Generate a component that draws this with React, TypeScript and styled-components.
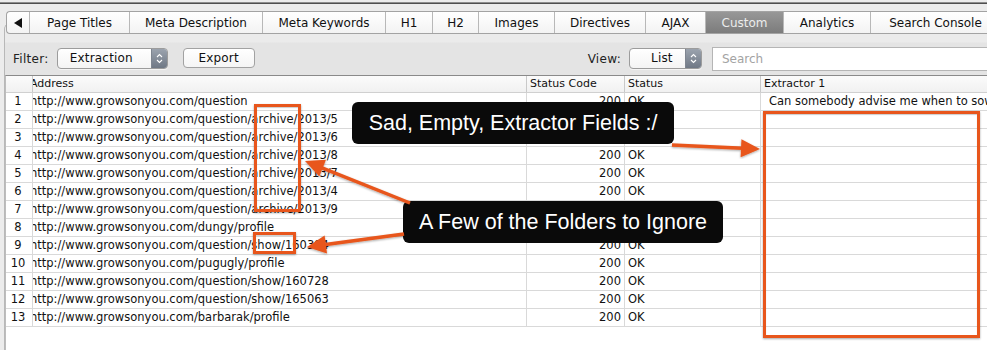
import React from 'react'
import styled, { createGlobalStyle } from 'styled-components'

const GlobalStyle = createGlobalStyle`
  html, body {
    margin: 0;
    padding: 0;
    background: #ececec;
    overflow: hidden;
  }
  body {
    font-family: 'DejaVu Sans', 'Liberation Sans', sans-serif;
  }
`

const ORANGE = '#e8561c'

const tabs = [
  { label: 'Page Titles', width: 100 },
  { label: 'Meta Description', width: 133 },
  { label: 'Meta Keywords', width: 123 },
  { label: 'H1', width: 47 },
  { label: 'H2', width: 46 },
  { label: 'Images', width: 76 },
  { label: 'Directives', width: 91 },
  { label: 'AJAX', width: 60 },
  { label: 'Custom', width: 78, active: true },
  { label: 'Analytics', width: 87 },
  { label: 'Search Console', width: 130 },
]

const base = 'http://www.growsonyou.com'
const rows = [
  { url: `${base}/question`, extract: 'Can somebody advise me when to sow my seeds this year' },
  { url: `${base}/question/archive/2013/5` },
  { url: `${base}/question/archive/2013/6` },
  { url: `${base}/question/archive/2013/8` },
  { url: `${base}/question/archive/2013/7` },
  { url: `${base}/question/archive/2013/4` },
  { url: `${base}/question/archive/2013/9` },
  { url: `${base}/dungy/profile` },
  { url: `${base}/question/show/160394` },
  { url: `${base}/pugugly/profile` },
  { url: `${base}/question/show/160728` },
  { url: `${base}/question/show/165063` },
  { url: `${base}/barbarak/profile` },
]

const COLS = '27px 494px 98px 136px 300px'

// arrow from tail to tip, head drawn as a triangle
const arrowHead = (x1: number, y1: number, x2: number, y2: number, len = 19, half = 9) => {
  const dx = x2 - x1
  const dy = y2 - y1
  const d = Math.sqrt(dx * dx + dy * dy)
  const ux = dx / d
  const uy = dy / d
  const bx = x2 - ux * len
  const by = y2 - uy * len
  return {
    line: { x1, y1, x2: bx + ux * 2, y2: by + uy * 2 },
    points: `${x2},${y2} ${bx - uy * half},${by + ux * half} ${bx + uy * half},${by - ux * half}`,
  }
}

const arrows = [
  arrowHead(672, 145, 760, 149),
  arrowHead(410, 203, 305, 161),
  arrowHead(404, 234, 307, 247),
]

const Chevrons = () => (
  <svg width="7" height="11" viewBox="0 0 7 11">
    <path d="M1 4 L3.5 1.5 L6 4 M1 7 L3.5 9.5 L6 7" stroke="#fff" strokeWidth="1.1" fill="none" />
  </svg>
)

const App = () => {
  return (
    <Screen>
      <GlobalStyle />
      <TopRule />
      <TabStrip>
        <Tab $width={23}>
          <svg width="9" height="10" viewBox="0 0 9 10">
            <polygon points="0,5 8,0 8,10" fill="#111" />
          </svg>
        </Tab>
        {tabs.map(t => (
          <Tab key={t.label} $width={t.width} $active={t.active}>
            {t.label}
          </Tab>
        ))}
      </TabStrip>
      <Panel>
        <Toolbar>
          <Label>Filter:</Label>
          <Select $width={111}>
            <SelectText>Extraction</SelectText>
            <Stepper>
              <Chevrons />
            </Stepper>
          </Select>
          <Button>Export</Button>
          <Spacer />
          <Label>View:</Label>
          <Select $width={73}>
            <SelectText $pad={21}>List</SelectText>
            <Stepper>
              <Chevrons />
            </Stepper>
          </Select>
          <SearchBox>Search</SearchBox>
        </Toolbar>
        <Table>
          <HeaderRow>
            <HeadCell />
            <HeadCell><Clip>Address</Clip></HeadCell>
            <HeadCell>Status Code</HeadCell>
            <HeadCell>Status</HeadCell>
            <HeadCell>Extractor 1</HeadCell>
          </HeaderRow>
          {rows.map((r, i) => (
            <Row key={i}>
              <NumCell>{i + 1}</NumCell>
              <Cell><Clip>{r.url}</Clip></Cell>
              <Cell $align="right">200</Cell>
              <Cell>OK</Cell>
              <Cell $indent={8}>{r.extract || ''}</Cell>
            </Row>
          ))}
        </Table>
      </Panel>

      <Callout $left={352} $top={102} $width={322}>Sad, Empty, Extractor Fields :/</Callout>
      <Callout $left={403} $top={201} $width={320}>A Few of the Folders to Ignore</Callout>

      <Marker $left={254} $top={104} $width={47} $height={108} />
      <Marker $left={253} $top={232} $width={43} $height={22} />
      <Marker $left={763} $top={111} $width={217} $height={227} />

      <Arrows width="987" height="350" viewBox="0 0 987 350">
        <defs>
          <filter id="sh" x="-10%" y="-10%" width="120%" height="120%">
            <feDropShadow dx="0" dy="1" stdDeviation="0.8" floodColor="#000" floodOpacity="0.35" />
          </filter>
        </defs>
        {arrows.map((a, i) => (
          <g key={i} filter="url(#sh)">
            <line {...a.line} stroke={ORANGE} strokeWidth="3.5" />
            <polygon points={a.points} fill={ORANGE} />
          </g>
        ))}
      </Arrows>
    </Screen>
  )
}

export default App

const Screen = styled.div`
  position: relative;
  width: 987px;
  height: 350px;
  overflow: hidden;
  background: #ececec;
`

const TopRule = styled.div`
  height: 11px;
  box-sizing: border-box;
  padding-top: 2px;
  &::before {
    content: '';
    display: block;
    height: 0;
    border-top: 1px solid #8d8d8d;
    border-bottom: 1px solid #4f4f4f;
  }
`

const TabStrip = styled.div`
  position: relative;
  z-index: 1;
  display: flex;
  margin-left: 6px;
  margin-bottom: -10px;
  height: 21px;
  width: max-content;
  border: 1px solid #a3a3a3;
  border-right: none;
  border-radius: 4px 0 0 4px;
  background: linear-gradient(#ffffff, #f3f3f3);
  overflow: hidden;
`

const Tab = styled.div<{ $width: number; $active?: boolean }>`
  flex: 0 0 auto;
  width: ${p => p.$width - 1}px;
  border-right: 1px solid #b8b8b8;
  display: flex;
  align-items: center;
  justify-content: center;
  font-size: 12px;
  color: ${p => (p.$active ? '#ececec' : '#111')};
  background: ${p => (p.$active ? 'linear-gradient(#979797, #7c7c7c)' : 'transparent')};
`

const Panel = styled.div`
  margin-left: 4px;
  border-left: 1px solid #b8b8b8;
  border-top: 1px solid #b8b8b8;
  border-radius: 5px 0 0 0;
  background: linear-gradient(#ebebeb 0, #ebebeb 17px, #e4e4e4 18px);
  padding-top: 10px;
  height: 327px;
  box-sizing: border-box;
`

const Toolbar = styled.div`
  display: flex;
  align-items: flex-start;
  height: 40px;
  box-sizing: border-box;
  padding: 13px 0 0 8px;
`

const Label = styled.span`
  font-size: 12px;
  letter-spacing: 0.3px;
  color: #222;
  line-height: 21px;
  margin-top: 1px;
  margin-right: 8px;
`

const Select = styled.div<{ $width: number }>`
  position: relative;
  width: ${p => p.$width}px;
  height: 21px;
  box-sizing: border-box;
  border: 1px solid #9c9c9c;
  border-radius: 4px;
  background: linear-gradient(#ffffff, #f4f4f4);
  display: flex;
  overflow: hidden;
  box-shadow: 0 1px 0 rgba(255, 255, 255, 0.6);
`

const SelectText = styled.span<{ $pad?: number }>`
  flex: 1;
  font-size: 12px;
  letter-spacing: 0.2px;
  line-height: 19px;
  padding-left: ${p => p.$pad || 12}px;
  color: #111;
`

const Stepper = styled.div`
  width: 15px;
  display: flex;
  align-items: center;
  justify-content: center;
  background: linear-gradient(#9ba3ae, #6f7885);
  border-left: 1px solid #7e8590;
`

const Button = styled.div`
  margin-left: 15px;
  width: 72px;
  height: 20px;
  box-sizing: border-box;
  border: 1px solid #a2a2a2;
  border-radius: 4px;
  background: linear-gradient(#ffffff, #f5f5f5);
  font-size: 12px;
  letter-spacing: 0.2px;
  line-height: 18px;
  text-align: center;
  color: #111;
`

const Spacer = styled.div`
  flex: 1;
`

const SearchBox = styled.div`
  flex: 0 0 auto;
  margin-left: 10px;
  margin-right: -3px;
  margin-top: -1px;
  width: 278px;
  height: 24px;
  box-sizing: border-box;
  border: 1px solid #b5b5b5;
  background: #fff;
  font-size: 12px;
  line-height: 22px;
  padding-left: 9px;
  color: #a3a3a3;
`

const Table = styled.div`
  border-top: 1px solid #8a8a8a;
  border-left: 1px solid #bdbdbd;
  background: #fff;
  height: 277px;
  font-size: 11.5px;
  color: #111;
`

const HeaderRow = styled.div`
  display: grid;
  grid-template-columns: ${COLS};
  height: 17px;
  box-sizing: border-box;
  background: linear-gradient(#fbfbfb, #f1f1f1);
  border-bottom: 1px solid #d0d0d0;
`

const HeadCell = styled.div`
  border-right: 1px solid #c9c9c9;
  line-height: 16px;
  padding-left: 3px;
  font-size: 11px;
  overflow: hidden;
  white-space: nowrap;
  &:nth-child(2) {
    padding-left: 0;
  }
`

const Row = styled.div`
  display: grid;
  grid-template-columns: ${COLS};
  height: 18px;
  box-sizing: border-box;
  border-bottom: 1px solid #d9d9d9;
`

const Cell = styled.div<{ $align?: string; $indent?: number }>`
  border-right: 1px solid #d9d9d9;
  line-height: 17px;
  white-space: nowrap;
  overflow: hidden;
  text-align: ${p => p.$align || 'left'};
  padding: 0 ${p => (p.$align === 'right' ? 3 : 0)}px 0 ${p => (p.$align === 'right' ? 0 : p.$indent ?? 3)}px;
  &:nth-child(2) {
    padding-left: 0;
  }
`

const NumCell = styled(Cell)`
  text-align: center;
  padding: 0 2px 0 0;
`

const Clip = styled.span`
  display: block;
  margin-left: -3px;
`

const Callout = styled.div<{ $left: number; $top: number; $width: number }>`
  position: absolute;
  left: ${p => p.$left}px;
  top: ${p => p.$top}px;
  width: ${p => p.$width}px;
  height: 42px;
  box-sizing: border-box;
  background: #0a0a0a;
  border-radius: 6px;
  color: #fff;
  font-family: 'Liberation Sans', Arial, sans-serif;
  font-size: 21.5px;
  line-height: 42px;
  text-align: center;
  white-space: nowrap;
`

const Marker = styled.div<{ $left: number; $top: number; $width: number; $height: number }>`
  position: absolute;
  left: ${p => p.$left}px;
  top: ${p => p.$top}px;
  width: ${p => p.$width}px;
  height: ${p => p.$height}px;
  box-sizing: border-box;
  border: 3px solid ${ORANGE};
  box-shadow: 0 1px 2px rgba(0, 0, 0, 0.35), inset 0 1px 1px rgba(0, 0, 0, 0.2);
`

const Arrows = styled.svg`
  position: absolute;
  left: 0;
  top: 0;
  pointer-events: none;
`
